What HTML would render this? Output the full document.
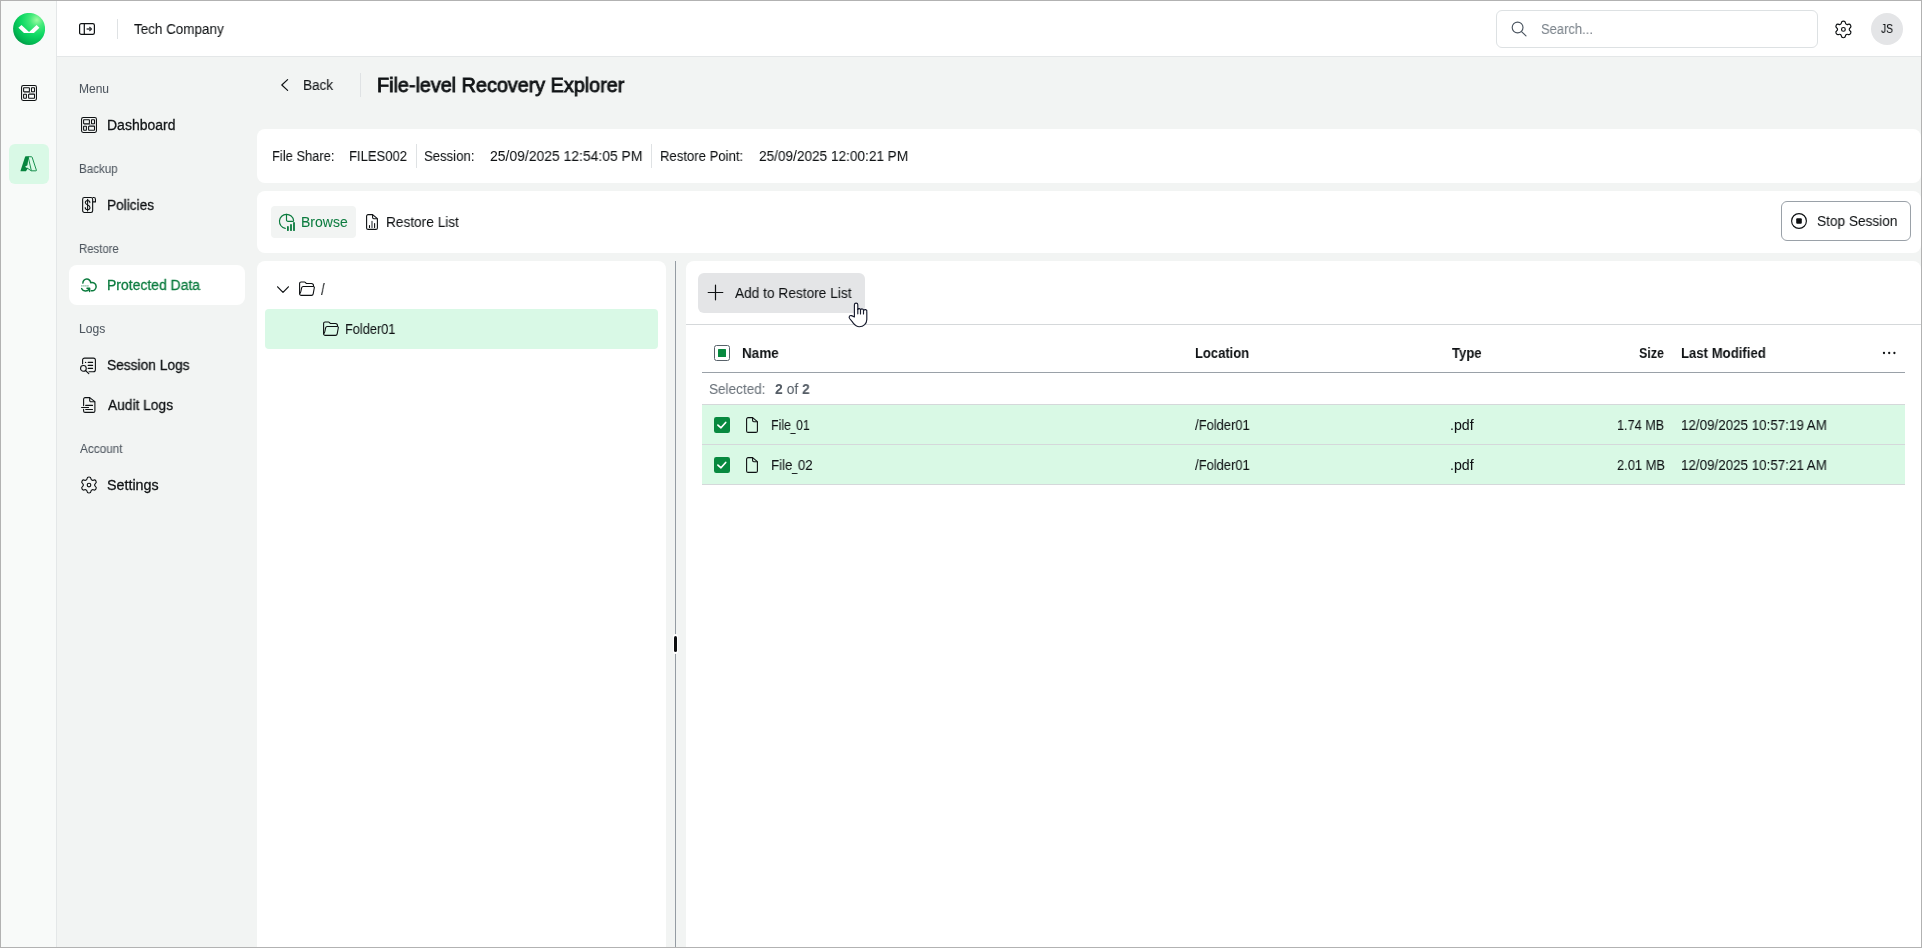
<!DOCTYPE html>
<html lang="en">
<head>
<meta charset="utf-8">
<title>File-level Recovery Explorer</title>
<style>
*{box-sizing:border-box;margin:0;padding:0}
html,body{width:1922px;height:948px;overflow:hidden;background:#f2f4f3}
body{font-family:"Liberation Sans",sans-serif;color:#101315;font-size:14px;position:relative}
.frame{position:absolute;left:0;top:0;width:1922px;height:948px;border:1px solid #b2b2b2;pointer-events:none;z-index:50}
.abs{position:absolute}
.t{will-change:transform;-webkit-text-stroke:0.06px currentColor;position:absolute;white-space:nowrap;line-height:20px;height:20px;transform-origin:0 50%}
/* rail */
.rail{position:absolute;left:1px;top:1px;width:56px;height:946px;background:#f8faf9;border-right:1px solid #e4e7e8}
.rail-active{position:absolute;left:9px;top:144px;width:40px;height:40px;border-radius:6px;background:#d9f9e6}
/* header */
.header{position:absolute;left:57px;top:1px;width:1864px;height:56px;background:#fff;border-bottom:1px solid #e4e7e8}
.hdiv{position:absolute;left:117px;top:19px;width:1px;height:20px;background:#dfe2e4}
.search{position:absolute;left:1496px;top:10px;width:322px;height:38px;border:1px solid #dde1e3;border-radius:6px;background:#fff}
.avatar{position:absolute;left:1871px;top:13px;width:32px;height:32px;border-radius:50%;background:#e4e5e7}
/* sidebar */
.sec{color:#4e565f;font-size:13px}
.nav{font-size:15px;color:#101315;-webkit-text-stroke:0.28px currentColor}
.nav-active{position:absolute;left:69px;top:265px;width:176px;height:40px;border-radius:8px;background:#fff}
.green{color:#0b7b3e}
/* cards */
.card{position:absolute;background:#fff;border-radius:8px}
.vdiv{position:absolute;width:1px;background:#dfe2e4}
.hline{position:absolute;height:1px;background:#d5d8da}
</style>
</head>
<body>
<!-- RAIL -->
<div class="rail"></div>
<div class="rail-active"></div>

<!-- HEADER -->
<div class="header"></div>
<div class="hdiv"></div>
<div class="t" id="t-company" style="left:134.38px;top:19px;font-size:14px;transform:scaleX(0.9606)">Tech Company</div>
<div class="search"></div>
<div class="t" id="t-search" style="left:1540.83px;top:19px;font-size:14px;color:#7b838b;transform:scaleX(0.9273)">Search...</div>
<div class="avatar"></div>
<div class="t" id="t-js" style="left:1880.74px;top:19px;font-size:12px;color:#101315;transform:scaleX(0.8600)">JS</div>

<!-- SIDEBAR -->
<div class="t sec" id="s-menu" style="left:78.79px;top:79px;font-size:12px;transform:scaleX(1.0000)">Menu</div>
<div class="t nav" id="n-dash" style="left:107.00px;top:115px;font-size:14px;transform:scaleX(0.9985)">Dashboard</div>
<div class="t sec" id="s-backup" style="left:78.81px;top:159px;font-size:12px;transform:scaleX(0.9650)">Backup</div>
<div class="t nav" id="n-pol" style="left:107.01px;top:195px;font-size:14px;transform:scaleX(0.9750)">Policies</div>
<div class="t sec" id="s-restore" style="left:78.82px;top:239px;font-size:12px;transform:scaleX(0.9476)">Restore</div>
<div class="nav-active"></div>
<div class="t nav green" id="n-prot" style="left:107.00px;top:275px;font-size:14px;transform:scaleX(0.9957)">Protected Data</div>
<div class="t sec" id="s-logs" style="left:78.59px;top:319px;font-size:12px;transform:scaleX(1.0080)">Logs</div>
<div class="t nav" id="n-sess" style="left:106.80px;top:355px;font-size:14px;transform:scaleX(0.9821)">Session Logs</div>
<div class="t nav" id="n-audit" style="left:107.78px;top:395px;font-size:14px;transform:scaleX(0.9836)">Audit Logs</div>
<div class="t sec" id="s-acc" style="left:79.59px;top:439px;font-size:12px;transform:scaleX(0.9818)">Account</div>
<div class="t nav" id="n-set" style="left:106.78px;top:475px;font-size:14px;transform:scaleX(1.0200)">Settings</div>

<!-- TITLE ROW -->
<div class="t" id="t-back" style="left:303.21px;top:75px;font-size:14px;transform:scaleX(0.9710)">Back</div>
<div class="vdiv" style="left:360px;top:73px;height:24px"></div>
<div class="t" id="t-title" style="left:377.2px;top:73px;font-size:20px;line-height:24px;height:24px;font-weight:normal;-webkit-text-stroke:0.85px currentColor;transform:scaleX(0.9888)">File-level Recovery Explorer</div>

<!-- INFO CARD -->
<div class="card" style="left:257px;top:129px;width:1664px;height:54px"></div>
<div class="t" id="i-fs" style="left:271.65px;top:146px;font-size:14px;transform:scaleX(0.9227)">File Share:</div>
<div class="t" id="i-fsv" style="left:349.22px;top:146px;font-size:14px;transform:scaleX(0.9306)">FILES002</div>
<div class="vdiv" style="left:416px;top:144px;height:24px"></div>
<div class="t" id="i-ses" style="left:424.41px;top:146px;font-size:14px;transform:scaleX(0.9396)">Session:</div>
<div class="t" id="i-sesv" style="left:490.39px;top:146px;font-size:14px;transform:scaleX(0.9941)">25/09/2025 12:54:05 PM</div>
<div class="vdiv" style="left:651px;top:144px;height:24px"></div>
<div class="t" id="i-rp" style="left:660.22px;top:146px;font-size:14px;transform:scaleX(0.9364)">Restore Point:</div>
<div class="t" id="i-rpv" style="left:758.79px;top:146px;font-size:14px;transform:scaleX(0.9725)">25/09/2025 12:00:21 PM</div>

<!-- TOOLBAR CARD -->
<div class="card" style="left:257px;top:191px;width:1664px;height:62px"></div>
<div class="abs" style="left:271px;top:206px;width:85px;height:32px;border-radius:4px;background:#f2f4f3"></div>
<div class="t green" id="b-browse" style="left:301.19px;top:212px;font-size:14px;transform:scaleX(0.9978)">Browse</div>
<div class="t" id="b-rl" style="left:386.01px;top:212px;font-size:14px;transform:scaleX(0.9760)">Restore List</div>
<div class="abs" style="left:1781px;top:201px;width:130px;height:40px;border:1px solid #9aa1a8;border-radius:6px;background:#fff"></div>
<div class="t" id="b-stop" style="left:1816.79px;top:211px;font-size:14px;transform:scaleX(0.9747)">Stop Session</div>

<!-- TREE PANEL -->
<div class="card" style="left:257px;top:261px;width:409px;height:700px;border-radius:8px 8px 0 0"></div>
<div class="t" id="tr-root" style="left:320.6px;top:279.6px;font-size:17px;transform:scaleX(0.78)">/</div>
<div class="abs" style="left:265px;top:309px;width:393px;height:40px;border-radius:4px;background:#d9f9e6"></div>
<div class="t" id="tr-f1" style="left:345.23px;top:319px;font-size:14px;transform:scaleX(0.9109)">Folder01</div>

<!-- SPLITTER -->
<div class="abs" style="left:675px;top:261px;width:1px;height:686px;background:#959ca3"></div>
<div class="abs" style="left:673px;top:634px;width:5px;height:20px;border-radius:2.5px;background:#fff"></div><div class="abs" style="left:674px;top:636px;width:3px;height:16px;border-radius:1.5px;background:#0c0e10"></div>

<!-- RIGHT PANEL -->
<div class="card" style="left:686px;top:261px;width:1235px;height:700px;border-radius:8px 8px 0 0"></div>
<div class="abs" style="left:698px;top:273px;width:167px;height:40px;border-radius:6px;background:#e4e5e7"></div>
<div class="t" id="b-add" style="left:734.58px;top:283px;font-size:14px;transform:scaleX(0.9783)">Add to Restore List</div>
<div class="hline" style="left:686px;top:324px;width:1235px"></div>

<!-- TABLE -->
<div class="t" id="h-name" style="left:742.02px;top:343px;font-weight:bold;-webkit-text-stroke:0;font-size:14px;transform:scaleX(0.9632)">Name</div>
<div class="t" id="h-loc" style="left:1195.00px;top:343px;font-weight:bold;-webkit-text-stroke:0;font-size:14px;transform:scaleX(0.9276)">Location</div>
<div class="t" id="h-type" style="left:1451.77px;top:343px;font-weight:bold;-webkit-text-stroke:0;font-size:14px;transform:scaleX(0.9375)">Type</div>
<div class="t" id="h-size" style="left:1638.56px;top:343px;font-weight:bold;-webkit-text-stroke:0;font-size:14px;transform:scaleX(0.8897)">Size</div>
<div class="t" id="h-lm" style="left:1680.61px;top:343px;font-weight:bold;-webkit-text-stroke:0;font-size:14px;transform:scaleX(0.9389)">Last Modified</div>
<div class="hline" style="left:702px;top:372px;width:1203px;background:#9aa1a8"></div>
<div class="t" id="sel-l" style="left:709.40px;top:379px;color:#6a727a;font-size:14px;transform:scaleX(0.9672)">Selected:</div>
<div class="t" id="sel-v" style="left:775.00px;top:379px;color:#555d66;font-size:14px;transform:scaleX(0.9914)"><b style="-webkit-text-stroke:0">2</b> of <b style="-webkit-text-stroke:0">2</b></div>
<div class="abs" style="left:702px;top:404px;width:1203px;height:81px;background:#d9f9e5"></div>
<div class="hline" style="left:702px;top:404px;width:1203px"></div>
<div class="hline" style="left:702px;top:444px;width:1203px"></div>
<div class="hline" style="left:702px;top:484px;width:1203px"></div>

<div class="t" id="r1-n" style="left:771.17px;top:415px;font-size:14px;transform:scaleX(0.8860)">File<span style="display:inline-block;transform:scaleX(0.72);transform-origin:50% 50%;margin:0 -1.1px;position:relative;top:1px">_</span>01</div>
<div class="t" id="r1-l" style="left:1195.34px;top:415px;font-size:14px;transform:scaleX(0.9267)">/Folder01</div>
<div class="t" id="r1-t" style="left:1449.78px;top:415px;font-size:14px;transform:scaleX(1.0130)">.pdf</div>
<div class="t" id="r1-s" style="left:1617.18px;top:415px;font-size:14px;transform:scaleX(0.9038)">1.74 MB</div>
<div class="t" id="r1-m" style="left:1681.19px;top:415px;font-size:14px;transform:scaleX(0.9559)">12/09/2025 10:57:19 AM</div>

<div class="t" id="r2-n" style="left:771.07px;top:455px;font-size:14px;transform:scaleX(0.9512)">File<span style="display:inline-block;transform:scaleX(0.72);transform-origin:50% 50%;margin:0 -1.1px;position:relative;top:1px">_</span>02</div>
<div class="t" id="r2-l" style="left:1195.34px;top:455px;font-size:14px;transform:scaleX(0.9267)">/Folder01</div>
<div class="t" id="r2-t" style="left:1449.78px;top:455px;font-size:14px;transform:scaleX(1.0130)">.pdf</div>
<div class="t" id="r2-s" style="left:1616.57px;top:455px;font-size:14px;transform:scaleX(0.9192)">2.01 MB</div>
<div class="t" id="r2-m" style="left:1681.19px;top:455px;font-size:14px;transform:scaleX(0.9559)">12/09/2025 10:57:21 AM</div>


<!-- ICON DEFS -->
<svg width="0" height="0" style="position:absolute">
 <defs>
  <radialGradient id="lg" cx="0.74" cy="0.22" r="0.95" fx="0.74" fy="0.22">
   <stop offset="0" stop-color="#9dfca2"/><stop offset="0.22" stop-color="#45ea7b"/><stop offset="0.5" stop-color="#10d964"/><stop offset="0.78" stop-color="#02b852"/><stop offset="1" stop-color="#018a42"/>
  </radialGradient>
  <symbol id="i-gear" viewBox="0 0 20 20"><path d="M8.01 3.79A2.00 2.00 0 0 1 11.99 3.79A1.67 1.67 0 0 0 14.38 5.17A2.00 2.00 0 0 1 16.37 8.62A1.67 1.67 0 0 0 16.37 11.38A2.00 2.00 0 0 1 14.38 14.83A1.67 1.67 0 0 0 11.99 16.21A2.00 2.00 0 0 1 8.01 16.21A1.67 1.67 0 0 0 5.62 14.83A2.00 2.00 0 0 1 3.63 11.38A1.67 1.67 0 0 0 3.63 8.62A2.00 2.00 0 0 1 5.62 5.17A1.67 1.67 0 0 0 8.01 3.79Z" fill="none" stroke="currentColor" stroke-width="1.15" stroke-linejoin="round"/><circle cx="10" cy="10" r="1.8" fill="none" stroke="currentColor" stroke-width="1.15"/></symbol>
  <symbol id="i-dash" viewBox="0 0 16 16"><g fill="none" stroke="currentColor" stroke-width="1.05"><rect x="0.55" y="0.55" width="14.9" height="14.9" rx="1.6"/><rect x="2.6" y="2.65" width="5.8" height="4" rx="0.35"/><rect x="10.5" y="2.65" width="3" height="4" rx="0.35"/><rect x="2.6" y="9.2" width="2.8" height="4" rx="0.35"/><rect x="7.6" y="9.2" width="5.9" height="4" rx="0.35"/></g><path d="M3 7.5H9.200M8 8.400H13.500" stroke="#7d8082" stroke-width="1.1" fill="none"/></symbol>
  <symbol id="i-doc" viewBox="0 0 12 16"><g fill="none" stroke="currentColor" stroke-width="1.1" stroke-linejoin="round"><path d="M0.6 2.1a1.5 1.5 0 0 1 1.5-1.5H6.6L11.4 4.6V13.9a1.5 1.5 0 0 1-1.5 1.5H2.1a1.5 1.5 0 0 1-1.5-1.5Z"/><path d="M6.6 0.8V3.5a1.2 1.2 0 0 0 1.2 1.2H11.2"/></g></symbol>
  <symbol id="i-folder" viewBox="0 0 16 15"><g fill="none" stroke="currentColor" stroke-width="1.1" stroke-linejoin="round" stroke-linecap="round"><path d="M0.6 12.8V2.5a1.5 1.5 0 0 1 1.5-1.5H5.5a1 1 0 0 1 .75.33l.75.8a1 1 0 0 0 .75.33H12.4a2.1 2.1 0 0 1 2.1 2.1v.5"/><path d="M0.6 12.8C1.9 12.6 2.2 8.2 2.7 6.6a1.5 1.5 0 0 1 1.4-1.1H14.3a1 1 0 0 1 1 1.25L14.2 12.9a1.8 1.8 0 0 1-1.75 1.5H2.2a1.6 1.6 0 0 1-1.6-1.6"/></g></symbol>
  <symbol id="i-chk" viewBox="0 0 16 16"><rect width="16" height="16" rx="2.2" fill="#07893f"/><path d="M3.9 8.1L7 10.8L11.7 5.5" fill="none" stroke="#fff" stroke-width="1.7" stroke-linecap="round" stroke-linejoin="round"/></symbol>
 </defs>
</svg>

<!-- LOGO -->
<svg class="abs" style="left:13px;top:13px" width="32" height="32" viewBox="0 0 32 32"><circle cx="16.1" cy="15.9" r="16" fill="url(#lg)"/><path d="M5.4 14.8L8.5 12L16.05 18.9L23.6 12L26.4 14.8L20.9 20H11Z" fill="#fff"/></svg>

<!-- RAIL ICONS -->
<svg class="abs" style="left:21px;top:85px;color:#0e1113" width="16" height="16"><use href="#i-dash"/></svg>
<svg class="abs" style="left:19.9px;top:155px" width="17.6" height="17.6" viewBox="0 0 96 96"><g fill="none" stroke="#07853f" stroke-width="5" stroke-linejoin="round" stroke-linecap="round"><path d="M46.500 9.500H62.500a4 4 0 0 1 3.700 2.600L89.300 82.500a2.800 2.800 0 0 1-2.600 3.800H64.500a3 3 0 0 1-2.900-2.300Z"/><path d="M40 72L61 86"/></g><path fill="#07853f" d="M32 6.900H47.500L40.500 56L27.500 63.500L42.500 73.500L32.500 89H6.500a3.500 3.500 0 0 1-3.300-4.700L27.800 9.800a4.300 4.300 0 0 1 4.200-2.900Z"/></svg>

<!-- HEADER ICONS -->
<svg class="abs" style="left:79px;top:23px;color:#0e1113" width="16" height="12" viewBox="0 0 16 12"><g fill="none" stroke="currentColor" stroke-width="1.2"><rect x="0.6" y="0.6" width="14.8" height="10.8" rx="1.7"/><path d="M5.3 0.6V11.4"/></g><path d="M7.6 6H12.2M10.4 4L12.5 6L10.4 8" fill="none" stroke="#3a3d40" stroke-width="1.3" stroke-linejoin="round"/></svg>
<svg class="abs" style="left:1510px;top:20px;color:#4b5560" width="18" height="18" viewBox="0 0 18 18"><g fill="none" stroke="currentColor" stroke-width="1.15" stroke-linecap="round"><circle cx="7.6" cy="7.5" r="5.4"/><path d="M11.5 11.6L16 15.8"/></g></svg>
<svg class="abs" style="left:1832.5px;top:18.6px;color:#0e1113" width="20.8" height="20.8"><use href="#i-gear"/></svg>

<!-- SIDEBAR ICONS -->
<svg class="abs" style="left:81px;top:117px;color:#0e1113" width="16" height="16"><use href="#i-dash"/></svg>
<svg class="abs" style="left:81px;top:197px;color:#0e1113" width="16" height="16" viewBox="0 0 16 16"><g fill="none" stroke="currentColor" stroke-width="1.1" stroke-linejoin="round"><rect x="1.65" y="0.55" width="10" height="14.9" rx="1.7"/><path d="M11.650 0.550h1.200a1.600 1.600 0 0 1 1.600 1.600V4.900H11.650"/></g><g fill="none" stroke="currentColor" stroke-width="1.05" stroke-linecap="round"><path d="M6.600 2.300V14"/><path d="M8.900 5.600C8.900 4.200 7.900 3.600 6.600 3.600C5.200 3.600 4.300 4.400 4.300 5.600C4.300 7 5.500 7.500 6.600 7.900C7.900 8.400 9 8.900 9 10.500C9 11.900 8 12.700 6.600 12.700C5.100 12.700 4.200 11.900 4.200 10.500"/></g></svg>
<svg class="abs" style="left:81px;top:277px;color:#0b7b3e" width="17" height="16" viewBox="0 0 17 16"><g fill="none" stroke="currentColor" stroke-width="1.5" stroke-linecap="round" stroke-linejoin="round"><path d="M1.9 6.1A3.9 3.9 0 1 1 9.7 5.8A4.1 4.1 0 1 1 10.300 13.700"/><path d="M0.6 11.6A4.4 4.4 0 0 0 8.3 12"/><path d="M6 11.300H8.600V14.500"/></g><path d="M0.2 8.900H7.900" fill="none" stroke="currentColor" stroke-width="1.3" stroke-dasharray="1.4 0.6" opacity="0.55"/></svg>
<svg class="abs" style="left:80px;top:357px;color:#0e1113" width="17" height="18" viewBox="0 0 17 18"><g fill="none" stroke="currentColor" stroke-width="1.1" stroke-linecap="round"><path d="M2.6 6.8V3.1a2 2 0 0 1 2-2H13.4a2 2 0 0 1 2 2V12.8a2 2 0 0 1-2 2H9"/><path d="M8.2 5.4H12.6M8.2 8.4H12.6M8.2 11.4H12.6"/><circle cx="3.4" cy="11.4" r="2.85"/><path d="M5.5 13.5L8.8 16.6"/></g><circle cx="5.6" cy="5.4" r="0.7" fill="currentColor"/></svg>
<svg class="abs" style="left:81px;top:397px;color:#0e1113" width="16" height="16" viewBox="0 0 16 16"><g fill="none" stroke="currentColor" stroke-width="1.1" stroke-linecap="round" stroke-linejoin="round"><path d="M2.6 8.6V2.1a1.5 1.5 0 0 1 1.5-1.5H8.7L13.9 4.6V13.9a1.5 1.5 0 0 1-1.5 1.5H4.1a1.5 1.5 0 0 1-1.5-1.5V12.2"/><path d="M8.7 0.8V3.5a1.2 1.2 0 0 0 1.2 1.2H13.6"/><path d="M4.7 8.4H11.5M0.6 10.5H7.5M4.7 12.5H11.5"/></g></svg>
<svg class="abs" style="left:78.95px;top:474.9px;color:#0e1113" width="20" height="20"><use href="#i-gear"/></svg>

<!-- TITLE / TOOLBAR ICONS -->
<svg class="abs" style="left:280px;top:78px;color:#0e1113" width="10" height="14" viewBox="0 0 10 14"><path d="M7.6 1.6L1.8 7L7.6 12.4" fill="none" stroke="currentColor" stroke-width="1.2" stroke-linecap="round" stroke-linejoin="round"/></svg>
<svg class="abs" style="left:278px;top:213px;color:#0b7b3e" width="18" height="19" viewBox="0 0 18 19"><g fill="none" stroke="currentColor" stroke-linecap="round"><path d="M15.6 7.5A7.1 7.1 0 1 0 7.3 15.4" stroke-width="1.15"/><path d="M8.5 1.4V6.9a1.4 1.4 0 0 0 1.4 1.4H15.3" stroke-width="1.15"/><path d="M9.9 13.8V17.2M13 11.8V17.2M16 9.8V17.2" stroke-width="1.8"/></g></svg>
<svg class="abs" style="left:366px;top:214px;color:#0e1113" width="12" height="16"><use href="#i-doc"/></svg>
<svg class="abs" style="left:366px;top:214px" width="12" height="16" viewBox="0 0 12 16"><g fill="none" stroke-linecap="round"><path d="M3.5 11.5V13.5M8.6 9.5V13.5" stroke="#0e1113" stroke-width="1.1"/><path d="M6 7.6V13.4" stroke="#777b7e" stroke-width="1.7"/></g></svg>
<svg class="abs" style="left:1790px;top:212px;color:#0e1113" width="18" height="18" viewBox="0 0 18 18"><circle cx="9" cy="9" r="7.4" fill="none" stroke="currentColor" stroke-width="1.15"/><rect x="6.2" y="6.2" width="5.6" height="5.6" rx="1" fill="#0c0e10"/></svg>

<!-- TREE ICONS -->
<svg class="abs" style="left:276px;top:285px;color:#0e1113" width="14" height="9" viewBox="0 0 14 9"><path d="M1.6 1.8L7 7.4L12.4 1.8" fill="none" stroke="currentColor" stroke-width="1.2" stroke-linecap="round" stroke-linejoin="round"/></svg>
<svg class="abs" style="left:299px;top:281px;color:#0e1113" width="16" height="15"><use href="#i-folder"/></svg>
<svg class="abs" style="left:323px;top:321px;color:#0e1113" width="16" height="15"><use href="#i-folder"/></svg>

<!-- TABLE ICONS -->
<svg class="abs" style="left:707px;top:284px;color:#0e1113" width="17" height="17" viewBox="0 0 17 17"><path d="M8.5 1.2V15.8M1.2 8.5H15.8" fill="none" stroke="currentColor" stroke-width="1.2" stroke-linecap="round"/></svg>
<svg class="abs" style="left:714px;top:345px" width="16" height="16" viewBox="0 0 16 16"><rect x="0.5" y="0.5" width="15" height="15" rx="2" fill="#fff" stroke="#58626a" stroke-width="1"/><rect x="4" y="4" width="8" height="8" rx="0.5" fill="#07893f"/></svg>
<svg class="abs" style="left:714px;top:417px" width="16" height="16"><use href="#i-chk"/></svg>
<svg class="abs" style="left:714px;top:457px" width="16" height="16"><use href="#i-chk"/></svg>
<svg class="abs" style="left:746px;top:417px;color:#0e1113" width="12" height="16"><use href="#i-doc"/></svg>
<svg class="abs" style="left:746px;top:457px;color:#0e1113" width="12" height="16"><use href="#i-doc"/></svg>
<svg class="abs" style="left:1882px;top:351px" width="14" height="4" viewBox="0 0 14 4"><circle cx="2" cy="2" r="1.15" fill="#101315"/><circle cx="7.2" cy="2" r="1.15" fill="#101315"/><circle cx="12.4" cy="2" r="1.15" fill="#101315"/></svg>

<!-- CURSOR -->
<svg class="abs" style="left:846px;top:300px;z-index:40" width="24" height="30" viewBox="846 300 24 30"><path d="M854.400 317V304.800a1.700 1.700 0 0 1 3.400 0V309.500a1.400 1.400 0 0 1 2.700 .6a1.500 1.500 0 0 1 3 .7a1.700 1.700 0 0 1 3.300 1V319.500C866.800 323.600 863.600 326.700 859.300 326.700C856 326.700 854.200 324.200 852.600 322.200L849.600 318.500C848.500 317 849.700 315.100 851.400 315.600C852.600 316 853.500 316.500 854.400 317Z" fill="#fff" stroke="#171b2d" stroke-width="1.15" stroke-linejoin="round"/><path d="M857.800 309V313.800M860.500 310.300V314M863.500 311V314" fill="none" stroke="#171b2d" stroke-width="1.15" stroke-linecap="round"/></svg>

<div class="frame"></div>
</body>
</html>
